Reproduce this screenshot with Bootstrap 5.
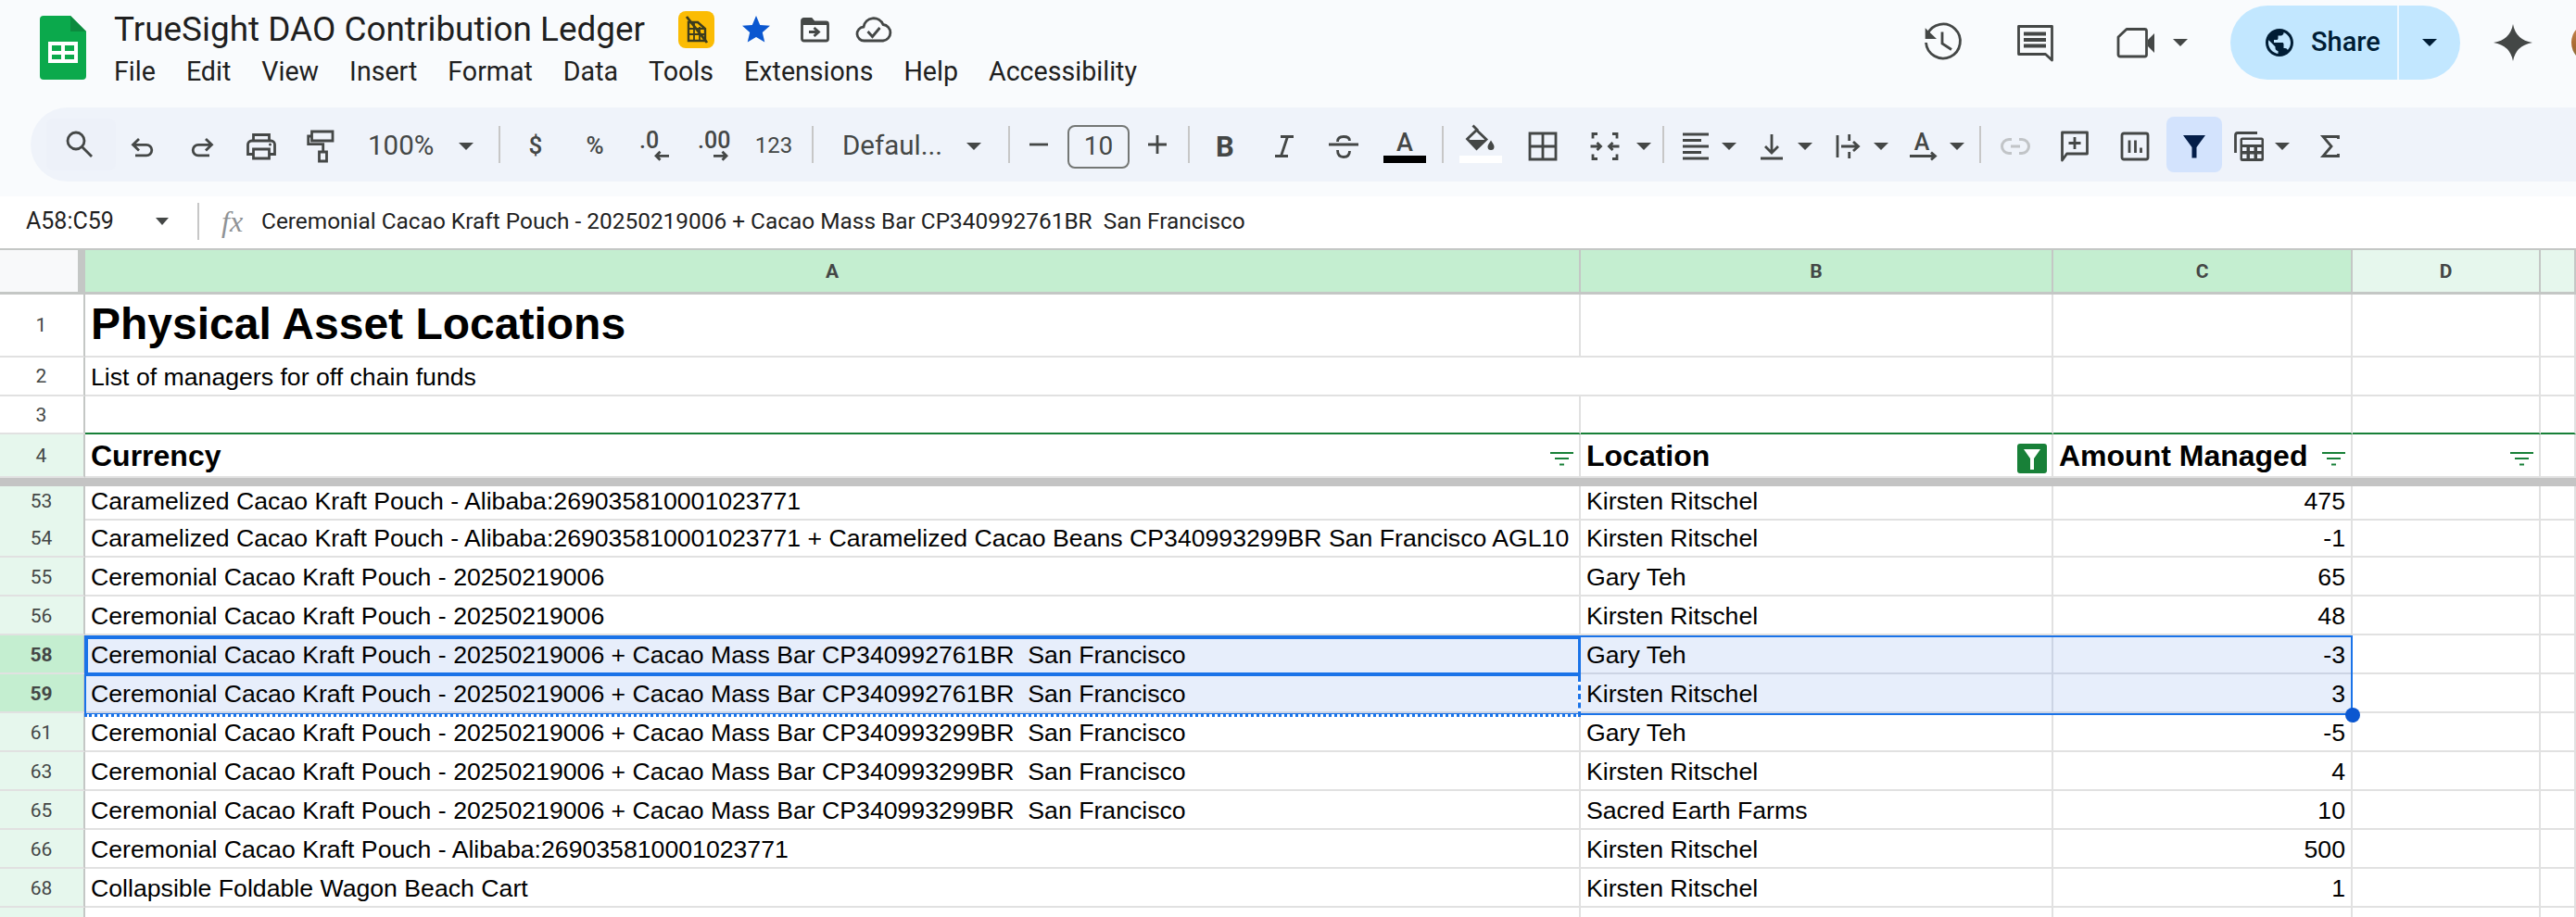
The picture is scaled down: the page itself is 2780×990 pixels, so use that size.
<!DOCTYPE html>
<html lang="en">
<head>
  <meta charset="UTF-8">
  <title>TrueSight DAO Contribution Ledger</title>
  <link href="https://cdn.jsdelivr.net/npm/bootstrap@5.3.0/dist/css/bootstrap.min.css" rel="stylesheet">
  <style>
    html, body { height: 990px; overflow: hidden; background: #f9fbfd; font-family: Roboto, "Liberation Sans", sans-serif; color: #444746; }
    svg { flex-shrink: 0; overflow: visible; display: block; }
    .ln { fill: none; stroke: #444746; stroke-width: 2.8; }
    .fl { fill: #444746; }
    .dd { width: 0; height: 0; border-left: 8px solid transparent; border-right: 8px solid transparent; border-top: 8px solid #444746; }

    /* top bar */
    .topbar { height: 116px; padding-left: 43px; }
    .logo { margin-top: 17px; margin-right: 30px; }
    .doc-title { font-size: 36.9px; line-height: 40px; color: #1f1f1f; white-space: nowrap; }
    .title-row { height: 40px; margin-top: 12px; }
    .menu-row { height: 40px; margin-top: 5px; gap: 33px; font-size: 28.6px; line-height: 40px; color: #1f1f1f; }
    .chip { width: 39px; height: 40px; margin-left: 36px; border-radius: 8px; background: #fbbc04; }
    .after-chip { margin-left: 27px; }
    .after-star { margin-left: 28px; }
    .after-folder { margin-left: 25px; }
    .right-group { height: 92px; margin-top: 0; }
    .mg55 { margin-left: 55px; }
    .mg65 { margin-left: 65px; }
    .mg18 { margin-left: 18px; }
    .mg46 { margin-left: 46px; }
    .mg35 { margin-left: 35px; }
    .mg41 { margin-left: 41px; }
    .share { width: 248px; height: 80px; border-radius: 40px; background: #c2e7ff; color: #001d35; }
    .share-main { width: 182px; height: 80px; padding-left: 35px; gap: 16px; font-size: 29px; font-weight: 500; border-right: 2px solid #f0f8ff; }
    .share-drop { width: 66px; height: 80px; }
    .share-drop .dd { border-top-color: #001d35; }
    .avatar-clip { width: 5px; height: 44px; overflow: hidden; }
    .avatar-pic { width: 44px; height: 44px; border-radius: 50%; background: linear-gradient(#c98a55, #a8682f 60%, #6f7b4a); }

    /* toolbar */
    .toolbar { height: 80px; margin-left: 33px; padding-left: 17px; background: #eff3fa; border-radius: 40px 0 0 40px; }
    .tool { width: 64px; height: 60px; padding-top: 4px; flex-shrink: 0; font-size: 26px; }
    .tool-num { padding-top: 2px; font-size: 24px; }
    .tool-sym { padding-top: 2px; font-size: 26px; font-weight: 500; }
    .w54 { width: 54px; }
    .w60 { width: 60px; }
    .w62 { width: 62px; }
    .w66 { width: 66px; }
    .w18 { width: 18px; }
    .search-tile { width: 75px; height: 56px; padding: 0 5px 0 0; margin-right: -3px; background: #edf1f9; border-radius: 8px; }
    .zoom-box { width: 160px; height: 60px; padding: 2px 0 0 19px; font-size: 29.5px; }
    .zoom-box .dd { margin: 2px 0 0 27px; }
    .tsep { width: 2px; height: 40px; background: #c7c7c7; flex-shrink: 0; }
    .font-box { width: 210px; height: 60px; padding: 2px 0 0 31px; font-size: 29.5px; }
    .font-box .dd { margin: 2px 0 0 26px; }
    .size-box { width: 67px; height: 47px; margin-top: 4px; border: 2px solid #747775; border-radius: 8px; font-size: 28px; flex-shrink: 0; }
    .filter-on { background: #d3e3fd; border-radius: 8px; }
    .group { padding-right: 10px; }
    .mg1 { margin-left: 1px; }
    .mg2 { margin-left: 2px; }
    .mg3 { margin-left: 3px; }
    .mg5 { margin-left: 5px; }
    .mg6 { margin-left: 6px; }
    .mg7 { margin-left: 7px; }
    .mg8 { margin-left: 8px; }
    .mg10 { margin-left: 10px; }
    .mg11 { margin-left: 11px; }
    svg text { font-family: Roboto, sans-serif; fill: #444746; }

    /* formula bar */
    .fbar { height: 56px; margin-top: 16px; padding-bottom: 2px; background: #fff; font-size: 24.4px; color: #1f1f1f; }
    .name-box { width: 213px; padding-left: 28px; font-size: 25px; white-space: nowrap; flex-shrink: 0; }
    .name-box .dd { margin-left: 45px; border-left-width: 7px; border-right-width: 7px; }
    .fx { width: 67px; padding-left: 24px; font: italic 32px "Liberation Serif", serif; color: #8f9295; flex-shrink: 0; }
    .ftext { white-space: pre; }

    /* sheet */
    .sheet { position: relative; height: 722px; overflow: hidden; background: #fff; font: 26.67px "Liberation Sans", Arial, sans-serif; color: #000; }
    .sr { display: grid; grid-template-columns: 92px 1614px 510px 323px 203px 1fr; }
    .sr > div { border-right: 2px solid #e1e1e1; border-bottom: 2px solid #e1e1e1; padding: 0 6px 3px; white-space: pre; display: flex; align-items: flex-end; line-height: 32px; }
    .h-col { height: 50px; border-top: 2px solid #c4c7c5; }
    .h-col > div { border-color: #c4c7c5; border-bottom-width: 3px; justify-content: center; align-items: center; padding: 0; font: 700 21px Roboto, sans-serif; color: #444746; background: #e6f7ed; }
    .sr > .corner { background: #f8f9fa; border-right-width: 8px; }
    .sr > .col-on { background: #c4eed0; }
    .h-title { height: 68px; }
    .h-42 { height: 42px; }
    .h-41 { height: 41px; }
    .h-head { height: 47px; }
    .h-part { height: 35px; }
    .h-end { height: 20px; }
    .sr > .rn { justify-content: center; align-items: center; padding: 0 1px 0 0; border-right-color: #c4c7c5; font: 21px Roboto, sans-serif; color: #444746; }
    .sr > .rn-g { background: #e6f7ed; }
    .sr > .rn-low { align-items: flex-end; padding-bottom: 6px; line-height: 26px; }
    .sr > .rn-on { background: #c4eed0; font-weight: 700; }
    .sr > .title-cell { font-size: 48px; font-weight: 700; padding-bottom: 9px; line-height: 50px; }
    .sr > .bold-cell { font-size: 32px; font-weight: 700; padding-bottom: 3px; justify-content: space-between; line-height: 38px; }
    .sr > .line-g { border-bottom-color: #188038; }
    .sr > .span-ab { grid-column: span 2; }
    .sr > .num { justify-content: flex-end; }
    .sr > .sel { background: #e7eefb; border-color: #ccd4e4; }
    .frozen { height: 9px; background: #c4c4c4; }
    .filt { margin-bottom: 8px; }
    .filt-on { width: 32px; height: 32px; margin-right: -1px; background: #188038; border-radius: 3px; flex-shrink: 0; }

    /* selection overlays */
    .range-box { position: absolute; left: 91px; top: 418px; width: 2448px; height: 86px; border: 2.5px solid #1a73e8; pointer-events: none; }
    .active-box { position: absolute; left: 91px; top: 418px; width: 1615px; height: 44px; border: 4px solid #1a73e8; border-right-width: 3px; pointer-events: none; }
    .copy-bottom { position: absolute; left: 91px; top: 503px; width: 1615px; height: 3px; border-top: 3px dotted #1a73e8; background: #fff; }
    .copy-right { position: absolute; left: 1703px; top: 462px; width: 3px; height: 44px; border-left: 3px dashed #1a73e8; background: #fff; }
    .fill-dot { position: absolute; left: 2531px; top: 496px; width: 16px; height: 16px; border-radius: 50%; background: #0b57d0; }
  </style>
</head>
<body>

<div class="topbar d-flex">
  <svg class="logo" width="50" height="69" viewBox="0 0 50 69">
    <path d="M4 0H33L50 17V65a4 4 0 0 1-4 4H4a4 4 0 0 1-4-4V4a4 4 0 0 1 4-4z" fill="#0ba94c"/>
    <path d="M33 0L50 17H33z" fill="#0c8a3e"/>
    <path d="M9 28H41V51H9zM13 32V38H23V32zM27 32V38H37V32zM13 42V47H23V42zM27 42V47H37V42z" fill="#fff" fill-rule="evenodd"/>
  </svg>
  <div>
    <div class="title-row d-flex align-items-center">
      <div class="doc-title">TrueSight DAO Contribution Ledger</div>
      <div class="chip d-flex align-items-center justify-content-center">
        <svg width="28" height="30" viewBox="0 0 28 30">
          <path d="M5 7H15L23 14V27H5z" fill="none" stroke="#3c3c1e" stroke-width="2.4"/>
          <path d="M5 14H23M5 20H23M11 8V27M17 12V27" stroke="#3c3c1e" stroke-width="1.8"/>
          <path d="M3 1L25 29" stroke="#3c3c1e" stroke-width="2.8"/>
        </svg>
      </div>
      <svg class="after-chip" width="36" height="36" viewBox="0 0 24 24"><path d="M12 17.27L18.18 21l-1.64-7.03L22 9.24l-7.19-.61L12 2 9.19 8.63 2 9.24l5.46 4.73L5.82 21z" fill="#0b57d0"/></svg>
      <svg class="after-star" width="36" height="36" viewBox="0 0 36 36">
        <path class="ln" d="M3.5 8.5a2 2 0 0 1 2-2h8l3 3.5h13a2 2 0 0 1 2 2v16a2 2 0 0 1-2 2h-24a2 2 0 0 1-2-2z"/>
        <path class="fl" d="M3 6h11l3 4h15v3H3z"/>
        <path class="ln" d="M11 20.5H20M16.5 16l5 4.5-5 4.5"/>
      </svg>
      <svg class="after-folder" width="40" height="36" viewBox="0 0 40 36">
        <path class="ln" d="M10 30a7.5 7.5 0 0 1-1-15A11 11 0 0 1 30 12.5 8.8 8.8 0 0 1 30 30z"/>
        <path class="ln" d="M13.5 20l5 5.5 8-9.5"/>
      </svg>
    </div>
    <div class="menu-row d-flex">
      <span>File</span><span>Edit</span><span>View</span><span>Insert</span><span>Format</span><span>Data</span><span>Tools</span><span>Extensions</span><span>Help</span><span>Accessibility</span>
    </div>
  </div>

  <div class="right-group ms-auto d-flex align-items-center">
    <svg width="44" height="44" viewBox="0 0 44 44">
      <path d="M5 13A18.5 18.5 0 1 1 3.5 22" class="ln" stroke-width="3"/>
      <path class="fl" d="M2.7 6.3V18H15z"/>
      <path class="ln" d="M21 10.5V23L31 29.5"/>
    </svg>
    <svg class="mg55" width="44" height="44" viewBox="0 0 44 44">
      <path class="ln" d="M4.5 4.5H40.5V41L33.5 34.5H4.5z" stroke-linejoin="round"/>
      <path class="fl" d="M10 10.500H34V14.500H10zM10 17H34V21H10zM10 23.500H34V27.500H10z"/>
    </svg>
    <svg class="mg65" width="44" height="44" viewBox="0 0 44 44">
      <path class="ln" d="M12 7.500H31.500a2 2 0 0 1 2 2V35a2 2 0 0 1-2 2H5a2 2 0 0 1-2-2V16z" stroke-linejoin="round"/>
      <path class="fl" d="M35 19L42 12V33L35 26z"/>
    </svg>
    <div class="dd mg18"></div>
    <div class="share mg46 d-flex">
      <div class="share-main d-flex align-items-center">
        <svg width="36" height="36" viewBox="0 0 24 24"><path fill="#001d35" d="M12 2C6.48 2 2 6.48 2 12s4.48 10 10 10 10-4.48 10-10S17.52 2 12 2zm-1 17.93c-3.95-.49-7-3.85-7-7.93 0-.62.08-1.21.21-1.79L9 15v1c0 1.1.9 2 2 2v1.93zm6.9-2.54c-.26-.81-1-1.39-1.900-1.390h-1v-3c0-.55-.45-1-1-1H8v-2h2c.55 0 1-.45 1-1V7h2c1.100 0 2-.9 2-2v-.41c2.930 1.190 5 4.060 5 7.410 0 2.080-.8 3.970-2.100 5.390z"/></svg>
        <span>Share</span>
      </div>
      <div class="share-drop d-flex align-items-center justify-content-center"><div class="dd"></div></div>
    </div>
    <svg class="mg35" width="44" height="44" viewBox="0 0 44 44"><path class="fl" d="M22 2Q25 19 43 22 25 25 22 42 19 25 1 22 19 19 22 2z"/></svg>
    <div class="avatar-clip mg41"><div class="avatar-pic"></div></div>
  </div>
</div>

<div class="toolbar d-flex align-items-center">
  <div class="tool search-tile d-flex align-items-center justify-content-center">
    <svg width="36" height="36" viewBox="0 0 36 36"><circle class="ln" cx="15" cy="14" r="9"/><path class="ln" d="M21.500 20.500L32 31"/></svg>
  </div>
  <div class="tool d-flex align-items-center justify-content-center">
    <svg width="36" height="36" viewBox="0 0 36 36"><path class="ln" d="M14 10L7.500 16.300 14 22.600M8 16.300H22a5.800 5.800 0 0 1 0 11.600H10"/></svg>
  </div>
  <div class="tool d-flex align-items-center justify-content-center">
    <svg width="36" height="36" viewBox="0 0 36 36"><path class="ln" d="M22 10L28.500 16.300 22 22.600M28 16.300H14a5.800 5.800 0 0 0 0 11.600H26"/></svg>
  </div>
  <div class="tool d-flex align-items-center justify-content-center">
    <svg width="36" height="36" viewBox="0 0 36 36">
      <path class="ln" d="M9.500 11V5.500H26.500V11M9 26.500H3.500V16a4 4 0 0 1 4-4h21a4 4 0 0 1 4 4v10.500H27"/>
      <path class="ln" d="M9.500 21H26.500V31H9.500z"/>
      <circle class="fl" cx="27.500" cy="16" r="1.500"/>
    </svg>
  </div>
  <div class="tool d-flex align-items-center justify-content-center">
    <svg width="36" height="36" viewBox="0 0 36 36">
      <path class="ln" d="M8.500 2H31V12H8.500z"/>
      <path class="ln" d="M8 7H4.700V15.700H20.700V24"/>
      <path class="ln" d="M16.500 24H24.500V34H16.500z"/>
    </svg>
  </div>
  <div class="zoom-box d-flex align-items-center"><span>100%</span><div class="dd"></div></div>
  <div class="tsep"></div>
  <div class="tool tool-sym mg6 d-flex align-items-center justify-content-center">$</div>
  <div class="tool tool-sym d-flex align-items-center justify-content-center">%</div>
  <div class="tool d-flex align-items-center justify-content-center">
    <svg width="48" height="36" viewBox="0 0 48 36">
      <text x="8" y="20" font-size="25" font-weight="500">.0</text>
      <path class="ln" d="M40 28.300H26M30.500 23.800L26 28.300 30.500 32.800"/>
    </svg>
  </div>
  <div class="tool d-flex align-items-center justify-content-center">
    <svg width="48" height="36" viewBox="0 0 48 36">
      <text x="7" y="20" font-size="25" font-weight="500">.00</text>
      <path class="ln" d="M24 28.300H38M33.500 23.800L38 28.300 33.500 32.800"/>
    </svg>
  </div>
  <div class="tool tool-num w66 d-flex align-items-center justify-content-center">123</div>
  <div class="tsep mg8"></div>
  <div class="font-box d-flex align-items-center"><span>Defaul...</span><div class="dd"></div></div>
  <div class="tsep"></div>
  <div class="tool w62 d-flex align-items-center justify-content-center">
    <svg width="36" height="36" viewBox="0 0 36 36"><path class="ln" d="M8 16H28"/></svg>
  </div>
  <div class="size-box d-flex align-items-center justify-content-center">10</div>
  <div class="tool w60 d-flex align-items-center justify-content-center">
    <svg width="36" height="36" viewBox="0 0 36 36"><path class="ln" d="M8 16H28M18 6V26"/></svg>
  </div>
  <div class="tsep mg3"></div>
  <div class="tool mg6 d-flex align-items-center justify-content-center">
    <svg width="36" height="36" viewBox="0 0 36 36"><text x="18" y="29" text-anchor="middle" font-size="31" font-weight="700">B</text></svg>
  </div>
  <div class="tool d-flex align-items-center justify-content-center">
    <svg width="36" height="36" viewBox="0 0 36 36"><path class="ln" stroke-width="4" d="M14 7.500H28M8 28.500H22M21.500 7.500L14.500 28.500"/></svg>
  </div>
  <div class="tool d-flex align-items-center justify-content-center">
    <svg width="36" height="36" viewBox="0 0 36 36"><path class="ln" d="M2 16H34M11.500 13C11.500 9 14 7.500 18 7.500 22 7.500 24.500 9 24.500 12M11.500 22C11.500 27 14 29.500 18 29.500 22 29.500 24.500 27.500 24.500 23"/></svg>
  </div>
  <div class="tool mg2 d-flex align-items-center justify-content-center">
    <svg width="48" height="36" viewBox="0 0 48 36">
      <text x="24" y="23" text-anchor="middle" font-size="27" font-weight="500">A</text>
      <rect x="1" y="28" width="46" height="8" fill="#000"/>
    </svg>
  </div>
  <div class="tsep mg8"></div>
  <div class="tool mg10 d-flex align-items-center justify-content-center">
    <svg width="48" height="36" viewBox="0 0 48 36">
      <path class="ln" d="M7.500 10L17.500 .5 28 10.500 17.500 20.500zM13.500 -4.500L19 1"/>
      <path class="fl" d="M8 11H27.500L17.500 20.500z"/>
      <path class="fl" d="M33 11.500C35 15 36.500 16.500 36.500 18.500a3.500 3.500 0 0 1-7 0C29.500 16.500 31 15 33 11.500z"/>
      <rect x="-1" y="28" width="46" height="8" fill="#fff"/>
    </svg>
  </div>
  <div class="tool mg1 d-flex align-items-center justify-content-center">
    <svg width="36" height="36" viewBox="0 0 36 36"><path class="ln" d="M4 4H32V32H4z"/><path class="ln" stroke-width="1.800" d="M18 4V32M4 18H32"/></svg>
  </div>
  <div class="tool w66 mg2 d-flex align-items-center justify-content-center">
    <svg width="36" height="36" viewBox="0 0 36 36">
      <path class="ln" d="M10 4.500H5V9.500M5 26.500V31.500H10M26 4.500H31V9.500M31 26.500V31.500H26"/>
      <path class="ln" d="M2.500 18H13M9.500 14L13.500 18 9.500 22M33.500 18H23M26.500 14L22.500 18 26.500 22"/>
    </svg>
  </div>
  <div class="tool w18 d-flex align-items-center justify-content-center"><div class="dd"></div></div>
  <div class="tsep mg11"></div>

  <div class="group mg7 d-flex">
    <div class="tool w54 d-flex align-items-center justify-content-center">
      <svg width="36" height="36" viewBox="0 0 36 36"><path class="ln" d="M4 5H32M4 11.500H24M4 18H32M4 24.500H24M4 31H32"/></svg>
    </div>
    <div class="tool w18 d-flex align-items-center justify-content-center"><div class="dd"></div></div>
  </div>
  <div class="group d-flex">
    <div class="tool w54 d-flex align-items-center justify-content-center">
      <svg width="36" height="36" viewBox="0 0 36 36"><path class="ln" d="M18 5V24M11 18L18 25 25 18M6 31H30"/></svg>
    </div>
    <div class="tool w18 d-flex align-items-center justify-content-center"><div class="dd"></div></div>
  </div>
  <div class="group d-flex">
    <div class="tool w54 d-flex align-items-center justify-content-center">
      <svg width="36" height="36" viewBox="0 0 36 36"><path class="ln" d="M7 6V30M19.700 5V12M19.700 24V31M11 18H28M24 13L29.500 18 24 23"/></svg>
    </div>
    <div class="tool w18 d-flex align-items-center justify-content-center"><div class="dd"></div></div>
  </div>
  <div class="group d-flex">
    <div class="tool w54 d-flex align-items-center justify-content-center">
      <svg width="36" height="36" viewBox="0 0 36 36">
        <text x="16" y="22" text-anchor="middle" font-size="25" font-weight="500">A</text>
        <path class="ln" d="M3 28.500H30M26 24.500L30.500 28.500 26 32.500"/>
      </svg>
    </div>
    <div class="tool w18 d-flex align-items-center justify-content-center"><div class="dd"></div></div>
  </div>
  <div class="tsep mg5"></div>
  <div class="tool mg5 d-flex align-items-center justify-content-center">
    <svg width="36" height="36" viewBox="0 0 36 36"><path fill="none" stroke="#c1c4c7" stroke-width="3" d="M14 10.500H11a7.500 7.500 0 0 0 0 15h3M22 10.500h3a7.500 7.500 0 0 1 0 15h-3M13 18H23"/></svg>
  </div>
  <div class="tool d-flex align-items-center justify-content-center">
    <svg width="36" height="36" viewBox="0 0 36 36"><path class="ln" d="M4.500 3H31.500V26H9.500L4.500 33z" stroke-linejoin="round"/><path class="ln" d="M18 8V21M11.500 14.500H24.500"/></svg>
  </div>
  <div class="tool mg1 d-flex align-items-center justify-content-center">
    <svg width="36" height="36" viewBox="0 0 36 36"><rect class="ln" x="4" y="4" width="28" height="28" rx="2"/><path class="ln" d="M12 11.500V25"/><path class="ln" stroke="#777" d="M18.500 11.500V25"/><path class="ln" d="M24.500 19.500V25"/></svg>
  </div>
  <div class="tool w60 filter-on mg2 d-flex align-items-center justify-content-center">
    <svg width="36" height="36" viewBox="0 0 36 36"><path fill="#041e49" d="M6 6H30L20.500 19V30.500H15.500V19z"/></svg>
  </div>
  <div class="tool w54 mg2 d-flex align-items-center justify-content-center">
    <svg width="36" height="36" viewBox="0 0 36 36">
      <path class="ln" d="M3.500 25V6A2.500 2.500 0 0 1 6 3.500H27"/>
      <rect class="fl" x="8.500" y="8.500" width="25.500" height="25.500" rx="2.500"/>
      <path fill="#eff3fa" d="M11 11H31.500V16H11zM11 19H15.500V23H11zM19 19H23.500V23H19zM27 19H31.500V23H27zM11 26.500H15.500V31H11zM19 26.500H23.500V31H19zM27 26.500H31.500V31H27z"/>
    </svg>
  </div>
  <div class="tool w18 d-flex align-items-center justify-content-center"><div class="dd"></div></div>
  <div class="tool mg11 d-flex align-items-center justify-content-center">
    <svg width="36" height="36" viewBox="0 0 36 36"><path class="ln" stroke-width="4.200" d="M26.500 10V7.500H10L19 18 10 28.500H26.500V26"/></svg>
  </div>
</div>

<div class="fbar d-flex align-items-center">
  <div class="name-box d-flex align-items-center"><span>A58:C59</span><div class="dd"></div></div>
  <div class="tsep"></div>
  <div class="fx">fx</div>
  <div class="ftext">Ceremonial Cacao Kraft Pouch - 20250219006 + Cacao Mass Bar CP340992761BR  San Francisco</div>
</div>

<div class="sheet" id="hoja">
  <div class="sr h-col">
    <div class="corner"></div>
    <div class="col-on">A</div><div class="col-on">B</div><div class="col-on">C</div><div>D</div><div></div>
  </div>
  <div class="sr h-title">
    <div class="rn">1</div><div class="title-cell">Physical Asset Locations</div><div></div><div></div><div></div><div></div>
  </div>
  <div class="sr h-42">
    <div class="rn">2</div><div class="span-ab">List of managers for off chain funds</div><div></div><div></div><div></div>
  </div>
  <div class="sr h-41">
    <div class="rn">3</div><div class="line-g"></div><div class="line-g"></div><div class="line-g"></div><div class="line-g"></div><div class="line-g"></div>
  </div>
  <div class="sr h-head">
    <div class="rn rn-g">4</div>
    <div class="bold-cell">Currency<svg class="filt" width="25" height="15" viewBox="0 0 25 15"><path d="M0 1H25M5 7H20M10 13.500H15" stroke="#188038" stroke-width="2" fill="none"/></svg></div>
    <div class="bold-cell">Location<div class="filt-on d-flex align-items-center justify-content-center"><svg width="18" height="26" viewBox="0 0 18 26"><path fill="#fff" d="M0 3H18L11 13V25H7V13z"/></svg></div></div>
    <div class="bold-cell">Amount Managed<svg class="filt" width="25" height="15" viewBox="0 0 25 15"><path d="M0 1H25M5 7H20M10 13.500H15" stroke="#188038" stroke-width="2" fill="none"/></svg></div>
    <div class="bold-cell justify-content-end"><svg class="filt" width="25" height="15" viewBox="0 0 25 15"><path d="M0 1H25M5 7H20M10 13.500H15" stroke="#188038" stroke-width="2" fill="none"/></svg></div>
    <div></div>
  </div>
  <div class="frozen"></div>
  <div id="filas"></div>

  <div class="range-box"></div>
  <div class="copy-bottom"></div>
  <div class="copy-right"></div>
  <div class="active-box"></div>
  <div class="fill-dot"></div>
</div>

<script src="https://cdn.jsdelivr.net/npm/bootstrap@5.3.0/dist/js/bootstrap.bundle.min.js"></script>
<script>
const pouch = 'Ceremonial Cacao Kraft Pouch - 20250219006';
const pouch761 = pouch + ' + Cacao Mass Bar CP340992761BR  San Francisco';
const pouch299 = pouch + ' + Cacao Mass Bar CP340993299BR  San Francisco';
const cara = 'Caramelized Cacao Kraft Pouch - Alibaba:269035810001023771';

const filas = [
  [53, cara, 'Kirsten Ritschel', '475'],
  [54, cara + ' + Caramelized Cacao Beans CP340993299BR San Francisco AGL10', 'Kirsten Ritschel', '-1'],
  [55, pouch, 'Gary Teh', '65'],
  [56, pouch, 'Kirsten Ritschel', '48'],
  [58, pouch761, 'Gary Teh', '-3'],
  [59, pouch761, 'Kirsten Ritschel', '3'],
  [61, pouch299, 'Gary Teh', '-5'],
  [63, pouch299, 'Kirsten Ritschel', '4'],
  [65, pouch299, 'Sacred Earth Farms', '10'],
  [66, 'Ceremonial Cacao Kraft Pouch - Alibaba:269035810001023771', 'Kirsten Ritschel', '500'],
  [68, 'Collapsible Foldable Wagon Beach Cart', 'Kirsten Ritschel', '1'],
  ['', '', '', '']
];

const cont = document.getElementById('filas');
filas.forEach((f, i) => {
  const on = f[0] === 58 || f[0] === 59;
  const sel = on ? ' sel' : '';
  const alto = i === 0 ? 'h-part' : (f[0] === '' ? 'h-end' : 'h-42');
  const fila = document.createElement('div');
  fila.className = 'sr ' + alto;
  fila.innerHTML = `
    <div class="rn rn-g rn-low${on ? ' rn-on' : ''}">${f[0]}</div>
    <div class="${sel}">${f[1]}</div>
    <div class="${sel}">${f[2]}</div>
    <div class="num${sel}">${f[3]}</div>
    <div></div><div></div>
  `;
  cont.appendChild(fila);
});
</script>
</body>
</html>
